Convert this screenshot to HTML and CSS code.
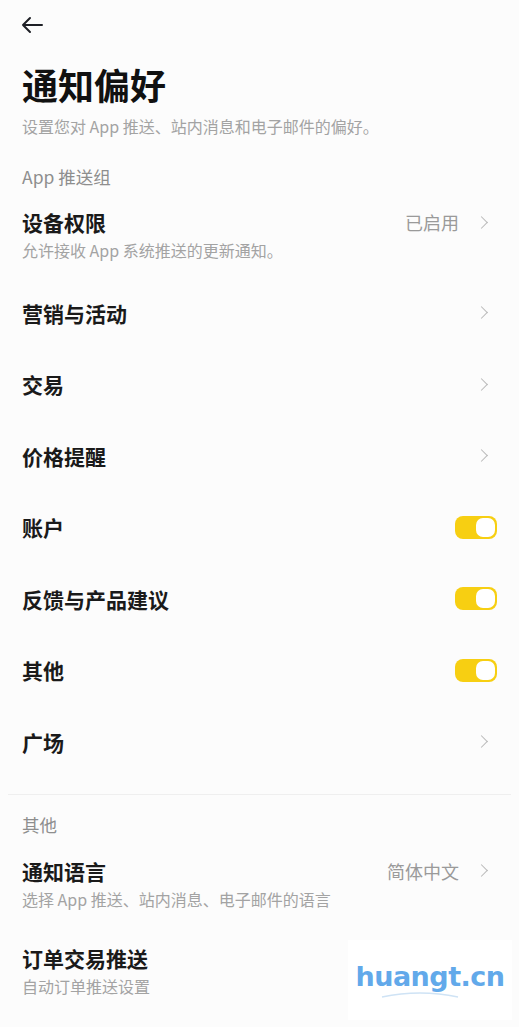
FILE: index.html
```html
<!DOCTYPE html>
<html lang="zh-CN">
<head>
  <meta charset="UTF-8" />
  <title>通知偏好</title>
  <link rel="stylesheet" href="styles.css">
</head>
<body>
  <div class="page">
    <div class="topbar">
      <svg class="back" width="24" height="24" viewBox="0 0 24 24">
        <path d="M22 12H3M10 5L3 12L10 19" fill="none" stroke="#1e2026" stroke-width="2" stroke-linecap="round" stroke-linejoin="round"/>
      </svg>
    </div>

    <h1>通知偏好</h1>
    <p class="intro">设置您对 App 推送、站内消息和电子邮件的偏好。</p>

    <div class="group-label">App 推送组</div>

    <div class="row two-line">
      <div class="row-text">
        <div class="row-title">设备权限</div>
        <div class="row-sub">允许接收 App 系统推送的更新通知。</div>
      </div>
      <div class="row-right">
        <span class="value">已启用</span>
        <span class="chev"></span>
      </div>
    </div>

    <div class="row"><div class="row-title">营销与活动</div><span class="chev"></span></div>
    <div class="row"><div class="row-title">交易</div><span class="chev"></span></div>
    <div class="row"><div class="row-title">价格提醒</div><span class="chev"></span></div>
    <div class="row"><div class="row-title">账户</div><span class="toggle on"></span></div>
    <div class="row"><div class="row-title">反馈与产品建议</div><span class="toggle on"></span></div>
    <div class="row"><div class="row-title">其他</div><span class="toggle on"></span></div>
    <div class="row"><div class="row-title">广场</div><span class="chev"></span></div>

    <div class="divider"></div>

    <div class="group-label second">其他</div>

    <div class="row two-line lang">
      <div class="row-text">
        <div class="row-title">通知语言</div>
        <div class="row-sub">选择 App 推送、站内消息、电子邮件的语言</div>
      </div>
      <div class="row-right">
        <span class="value">简体中文</span>
        <span class="chev"></span>
      </div>
    </div>

    <div class="row two-line order">
      <div class="row-text">
        <div class="row-title">订单交易推送</div>
        <div class="row-sub">自动订单推送设置</div>
      </div>
    </div>
  </div>

  <div class="watermark">
    <span>huangt.cn</span>
    <svg class="wave" width="80" height="8" viewBox="0 0 80 8">
      <path d="M2 6 Q40 -2 78 6" fill="none" stroke="#cfe3f5" stroke-width="1.5"/>
    </svg>
  </div>
</body>
</html>
```

FILE: styles.css
```css
body {
  margin: 0;
  background-color: #fcfcfc;
  font-family: "Noto Sans CJK SC", "Noto Sans", sans-serif;
  color: #1e2026;
}
.page {
  padding: 0 22px;
}
.topbar {
  height: 50px;
  display: flex;
  align-items: center;
}
.back {
  margin-left: -2px;
}
h1 {
  margin: 12px 0 0;
  font-size: 36px;
  line-height: 44px;
  font-weight: 700;
  color: #111;
}
.intro {
  margin: 9px 0 0;
  font-size: 16px;
  line-height: 22px;
  color: #a3a3a3;
}
.group-label {
  margin-top: 29px;
  font-size: 17.5px;
  line-height: 22px;
  color: #8e8e8e;
}
.group-label.second {
  margin-top: 19px;
}
.row {
  height: 71.5px;
  display: flex;
  align-items: center;
  justify-content: space-between;
}
.row.two-line {
  height: auto;
  padding: 21px 0 16px;
}
.row.lang {
  padding-top: 22px;
}
.row.order {
  padding-top: 19px;
}
.row-title {
  font-size: 21px;
  line-height: 26px;
  font-weight: 600;
  color: #1a1a1a;
}
.row-sub {
  margin-top: 4px;
  font-size: 16px;
  line-height: 22px;
  color: #a3a3a3;
}
.row.two-line .row-right {
  align-self: flex-start;
  height: 26px;
  display: flex;
  align-items: center;
}
.value {
  font-size: 18px;
  color: #9a9a9a;
  margin-right: 18px;
}
.chev {
  width: 8px;
  height: 8px;
  border-top: 1.5px solid #b8b8b8;
  border-right: 1.5px solid #b8b8b8;
  transform: rotate(45deg);
  margin-right: 11px;
}
.toggle {
  width: 42px;
  height: 23px;
  border-radius: 8px;
  background-color: #f7cf12;
  display: flex;
  align-items: center;
  justify-content: flex-end;
  padding: 0 2px;
  box-sizing: border-box;
}
.toggle::after {
  content: "";
  width: 19px;
  height: 19px;
  border-radius: 7px;
  background-color: #fff;
}
.divider {
  margin: 16px -14px 0;
  height: 1px;
  background-color: #efefef;
}
.watermark {
  position: absolute;
  left: 348px;
  top: 940px;
  width: 164px;
  height: 80px;
  background-color: #fff;
  display: flex;
  flex-direction: column;
  align-items: center;
  justify-content: center;
}
.watermark span {
  font-family: "DejaVu Sans", sans-serif;
  font-weight: 700;
  font-size: 27px;
  line-height: 32px;
  color: #62a9ea;
  letter-spacing: -0.5px;
}
.wave {
  margin-top: -2px;
  margin-right: 20px;
}
```
